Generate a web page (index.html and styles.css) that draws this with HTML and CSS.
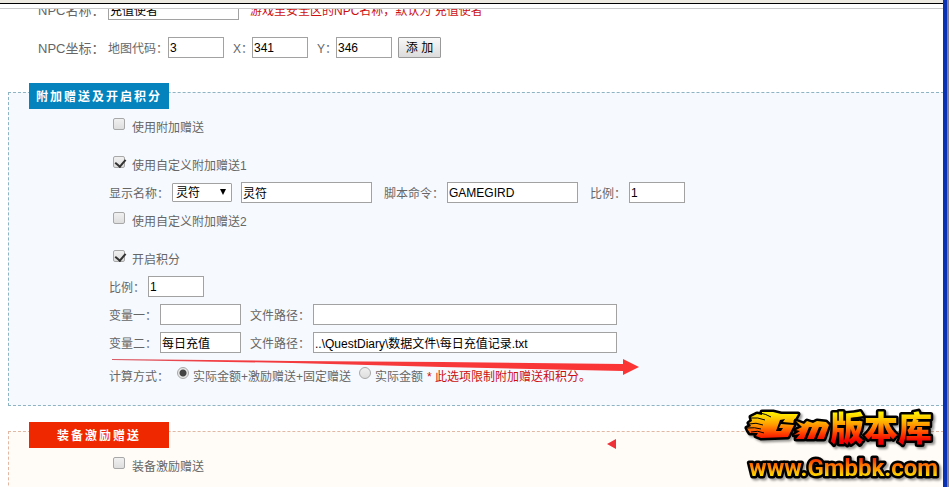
FILE: index.html
```
<!DOCTYPE html>
<html lang="zh-CN">
<head>
<meta charset="utf-8">
<title>NPC设置</title>
<link rel="stylesheet" href="styles.css">
</head>
<body>
<div class="window">
  <div class="toolbar"></div>
  <main class="page">
    <form>
      <div class="npc">
        <div class="row">
          <label class="head" for="npc-name">NPC名称：</label>
          <input class="text medium" id="npc-name" type="text" value="充值使者">
          <span class="hint">游戏里安全区的NPC名称，默认为 充值使者</span>
        </div>
        <div class="row">
          <span class="head">NPC坐标：</span>
          <label class="caption four" for="map">地图代码：</label>
          <input class="text small" id="map" type="text" value="3">
          <label class="axis" for="pos-x">X：</label>
          <input class="text small" id="pos-x" type="text" value="341">
          <label class="axis" for="pos-y">Y：</label>
          <input class="text small" id="pos-y" type="text" value="346">
          <button class="add" type="button">添 加</button>
        </div>
      </div>

      <section class="panel blue">
        <h2 class="title">附加赠送及开启积分</h2>
        <div class="group">
          <div class="row check">
            <input class="box" id="extra" type="checkbox">
            <label for="extra">使用附加赠送</label>
          </div>
        </div>
        <div class="group">
          <div class="row check">
            <input class="box" id="custom1" type="checkbox" checked>
            <label for="custom1">使用自定义附加赠送1</label>
          </div>
          <div class="row">
            <label class="caption wide" for="unit">显示名称：</label>
            <div class="picker"><select id="unit"><option>灵符</option></select></div>
            <input class="text medium spaced" type="text" value="灵符" aria-label="显示名称">
            <label class="caption wide after" for="command">脚本命令：</label>
            <input class="text medium" id="command" type="text" value="GAMEGIRD">
            <label class="caption two after" for="rate1">比例：</label>
            <input class="text small" id="rate1" type="text" value="1">
          </div>
          <div class="row check">
            <input class="box" id="custom2" type="checkbox">
            <label for="custom2">使用自定义附加赠送2</label>
          </div>
        </div>
        <div class="group">
          <div class="row check">
            <input class="box" id="points" type="checkbox" checked>
            <label for="points">开启积分</label>
          </div>
          <div class="row">
            <label class="caption two" for="rate2">比例：</label>
            <input class="text small" id="rate2" type="text" value="1">
          </div>
          <div class="row">
            <label class="caption three" for="var1">变量一：</label>
            <input class="text short" id="var1" type="text">
            <label class="caption wide path" for="path1">文件路径：</label>
            <input class="text long" id="path1" type="text">
          </div>
          <div class="row">
            <label class="caption three" for="var2">变量二：</label>
            <input class="text short" id="var2" type="text" value="每日充值">
            <label class="caption wide path" for="path2">文件路径：</label>
            <input class="text long" id="path2" type="text" value="..\QuestDiary\数据文件\每日充值记录.txt">
          </div>
        </div>
        <div class="row method">
          <span>计算方式：</span>
          <input class="box radio" id="full" name="method" type="radio" checked>
          <label for="full">实际金额+激励赠送+固定赠送</label>
          <input class="box radio" id="actual" name="method" type="radio">
          <label for="actual">实际金额</label>
          <span class="note">* 此选项限制附加赠送和积分。</span>
        </div>
      </section>

      <section class="panel orange">
        <h2 class="title">装备激励赠送</h2>
        <div class="group">
          <div class="row check">
            <input class="box" id="gear" type="checkbox">
            <label for="gear">装备激励赠送</label>
          </div>
        </div>
      </section>
    </form>
  </main>
</div>

<svg class="arrow" width="530" height="20" viewBox="0 0 530 20" aria-hidden="true">
  <defs>
    <linearGradient id="shaft" x1="0" x2="1" y1="0" y2="0">
      <stop offset="0" stop-color="#d85a66"/>
      <stop offset=".2" stop-color="#f23c40"/>
      <stop offset="1" stop-color="#fb3434"/>
    </linearGradient>
  </defs>
  <path d="M0 1 L180 3 L330 4 L511 6 L511 1 L527 9 L511 17 L511 13 L330 9 L180 5 L0 2 Z" fill="url(#shaft)"/>
</svg>
<svg class="pointer" width="10" height="12" viewBox="0 0 10 12" aria-hidden="true"><path d="M0 6 L9 1 V11 Z" fill="#ee3038"/></svg>

<svg class="logo" width="206" height="84" viewBox="0 0 206 84" role="img" aria-label="Gm版本库 www.Gmbbk.com">
  <defs>
    <linearGradient id="fire" gradientUnits="userSpaceOnUse" x1="0" y1="10" x2="0" y2="38">
      <stop offset="0" stop-color="#fff000"/>
      <stop offset=".4" stop-color="#ffa000"/>
      <stop offset=".75" stop-color="#ff3a00"/>
      <stop offset="1" stop-color="#f00000"/>
    </linearGradient>
    <linearGradient id="site" gradientUnits="userSpaceOnUse" x1="0" y1="52" x2="0" y2="75">
      <stop offset="0" stop-color="#e80000"/>
      <stop offset=".4" stop-color="#ff6a00"/>
      <stop offset="1" stop-color="#fff000"/>
    </linearGradient>
  </defs>
  <g class="shadow" fill="url(#fire)">
    <g class="outlined">
      <path d="M55 11 L50 20 L40 19 L42 16 L37 17 L33 28 L38 28 L40 25 L36 25 L38 21 L51 22 L45 34 L18 35 L13 33 L15 30 L7 30 L5 27 L4 25 L8 23 L6 20 L9 18 L8 14 L14 11 L19 12 L19 9 L30 9 L38 11 Z"/>
      <path d="M53 18 L61 21 L64 18 L70 20 L74 18 L83 19 L86 22 L81 36 L74 36 L79 24 L76 24 L71 36 L64 36 L69 24 L66 24 L61 36 L53 36 L57 31 L51 32 L57 28 L53 27 L59 24 Z"/>
      <text class="brand" x="87" y="38">版本库</text>
    </g>
    <path class="licks" d="M7 15 Q15 14 22 17 M6 21 Q13 19 20 22 M4 25 Q12 24 18 26 M8 29 Q15 27 21 30 M17 10 Q23 11 28 14"/>
  </g>
  <text class="site outlined shadow" x="6" y="73" fill="url(#site)">www.Gmbbk.com</text>
</svg>
</body>
</html>
```
FILE: styles.css
```
* {
  box-sizing: border-box;
}

body {
  margin: 0;
  height: 100vh;
  overflow: hidden;
  position: relative;
  background: #fff;
  color: #666;
  font: 12px/26px "Liberation Sans", "Noto Sans CJK SC", sans-serif;
}

.window {
  height: 100%;
  display: flex;
  flex-direction: column;
  margin-right: 2px;
  border-right: 4px solid #0831b4;
  box-shadow: 2px 0 0 #8584a0;
}

.toolbar {
  flex: none;
  height: 9px;
  border-bottom: 1px solid #c8c8c8;
  background: linear-gradient(#ece9e0 3px, #000 3px, #000 4px, #fff 4px);
}

.page {
  flex: 1;
  min-height: 0;
  overflow: hidden;
}

.row {
  display: flex;
  align-items: center;
  height: 28px;
  white-space: nowrap;
}

.row label,
.row span {
  padding-top: 2px;
}

.npc {
  display: grid;
  gap: 10px;
  margin-top: -13px;
  padding: 0 0 30px 38px;
}

.head {
  width: 70px;
  font-size: 13px;
}

.hint {
  margin-left: 11px;
  color: #cc1010;
}

.axis {
  width: 28px;
  padding-left: 9px;
}

.text {
  height: 21px;
  margin-bottom: 1px;
  padding: 0 1px;
  border: 1px solid #a2a2a2;
  border-radius: 0;
  background: #fff;
  color: #000;
  font: inherit;
  line-height: 19px;
}

.small { width: 56px; }
.short { width: 81px; }
.medium { width: 131px; }
.long { width: 304px; }
.spaced { margin-left: 9px; }

.two { width: 39px; }
.three { width: 51px; }
.four { width: 60px; }
.wide { width: 63px; }
.path { margin-left: 9px; }
.after { margin-left: 12px; }

.add {
  width: 43px;
  height: 21px;
  margin: 0 0 1px 6px;
  padding: 1px 0 0;
  border: 1px solid #999;
  border-radius: 1px;
  background: linear-gradient(#f8f8f8, #dcdcdc);
  color: #000;
  font: inherit;
  font-size: 12px;
  line-height: 18px;
}

.panel {
  margin: 0 -1px 25px 8px;
  padding-bottom: 15px;
  border: 1px dashed #8eb4c4;
}

.blue { background: #f6faff; }

.orange {
  border-color: #e0b8a4;
  background: #fffcf7;
}

.title {
  width: 140px;
  height: 26px;
  margin: -10px 0 4px 20px;
  background: #0583bd;
  color: #fff;
  font-size: 12px;
  line-height: 28px;
  letter-spacing: 2px;
  text-align: center;
}

.orange .title { background: #f02800; }

.group {
  margin-bottom: 10px;
  padding-left: 100px;
}

.check { padding-left: 4px; }

.box {
  appearance: none;
  flex: none;
  width: 12px;
  height: 12px;
  margin: 0 7px 6px 0;
  border: 1px solid #a8a8a8;
  border-radius: 2px;
  background: linear-gradient(#f0f0f0, #dedede);
}

.box[type="checkbox"]:checked::before {
  content: "";
  display: block;
  width: 5px;
  height: 8px;
  margin: 0 0 0 3px;
  border: solid #333;
  border-width: 0 2px 2px 0;
  transform: rotate(40deg);
}

.radio {
  margin: 0 4px 6px 8px;
  border-radius: 50%;
}

.radio:checked {
  background: radial-gradient(circle, #444 3px, #e8e8e8 4px);
}

.picker {
  position: relative;
  width: 60px;
  height: 19px;
  margin-bottom: 1px;
  display: flex;
}

.picker select {
  appearance: none;
  width: 100%;
  padding: 1px 3px 0;
  border: 1px solid #a2a2a2;
  border-radius: 1px;
  background: #fff;
  color: #000;
  font: inherit;
  line-height: 17px;
}

.picker::after {
  content: "";
  position: absolute;
  right: 6px;
  top: 6px;
  border: solid transparent;
  border-width: 6px 3px 0;
  border-top-color: #000;
}

.method {
  margin-top: -5px;
  padding-left: 100px;
}

.note {
  margin-left: 4px;
  color: #cc1010;
}

.arrow,
.pointer,
.logo {
  position: absolute;
  pointer-events: none;
}

.arrow {
  left: 112px;
  top: 358px;
}

.pointer {
  left: 607px;
  top: 438px;
}

.logo {
  right: 0;
  bottom: 0;
}

.outlined {
  stroke: #000;
  stroke-width: 5px;
  stroke-linejoin: round;
  paint-order: stroke;
}

.licks {
  fill: none;
  stroke: #000;
  stroke-width: 1px;
}

.shadow { filter: drop-shadow(2px 2px 1px #0006); }

.brand {
  font: 900 34px "Noto Sans CJK SC", sans-serif;
}

.site {
  font: 700 24px Roboto, sans-serif;
}
```
